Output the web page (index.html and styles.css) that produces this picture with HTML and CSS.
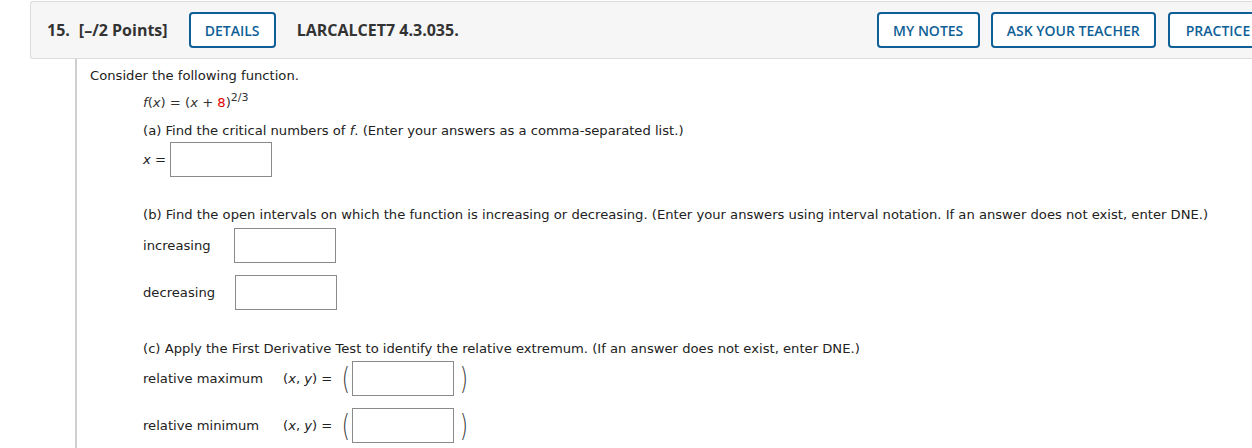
FILE: index.html
```html
<!DOCTYPE html>
<html>
<head>
<meta charset="utf-8">
<link rel="stylesheet" href="styles.css">
</head>
<body>
<div class="question">
  <div class="qhead">
    <span class="qnum">15.</span>
    <span class="qpts">[–/2 Points]</span>
    <span class="btn btn-details">DETAILS</span>
    <span class="qid">LARCALCET7 4.3.035.</span>
    <span class="spacer"></span>
    <span class="btn btn-notes">MY NOTES</span>
    <span class="btn btn-ask">ASK YOUR TEACHER</span>
    <span class="btn btn-practice">PRACTICE ANOTHER</span>
  </div>
  <div class="qbody">
    <p class="intro">Consider the following function.</p>
    <div class="indent">
      <p class="fn"><i>f</i>(<i>x</i>) = (<i>x</i> + <span class="red">8</span>)<sup>2/3</sup></p>
      <p class="part-a">(a) Find the critical numbers of <i>f</i>. (Enter your answers as a comma-separated list.)</p>
      <div class="row row-x"><span class="lbl-x"><i>x</i> =</span><span class="box"></span></div>
      <p class="part-b">(b) Find the open intervals on which the function is increasing or decreasing. (Enter your answers using interval notation. If an answer does not exist, enter DNE.)</p>
      <div class="row row-inc"><span class="lbl-int">increasing</span><span class="box"></span></div>
      <div class="row row-dec"><span class="lbl-int">decreasing</span><span class="box"></span></div>
      <p class="part-c">(c) Apply the First Derivative Test to identify the relative extremum. (If an answer does not exist, enter DNE.)</p>
      <div class="row row-ext"><span class="lbl-ext">relative maximum</span><span class="xy">(<i>x</i>, <i>y</i>) =</span><span class="paren">(</span><span class="box"></span><span class="paren">)</span></div>
      <div class="row row-ext2"><span class="lbl-ext">relative minimum</span><span class="xy">(<i>x</i>, <i>y</i>) =</span><span class="paren">(</span><span class="box"></span><span class="paren">)</span></div>
    </div>
  </div>
</div>
</body>
</html>
```
FILE: styles.css
```css
html, body { margin: 0; padding: 0; background: #fff; overflow: hidden; }
body { width: 1252px; height: 448px; }
.question { padding-top: 1px; margin-left: 30px; width: 1222px; overflow: hidden; }
.qhead {
  display: flex; align-items: center;
  height: 56px;
  width: 1400px;
  background: #f6f6f6;
  border: 1px solid #dcdcdc;
  border-right: none;
  border-radius: 3px 0 0 3px;
  font-family: "Open Sans", sans-serif;
  font-weight: 700;
  font-size: 16px;
  color: #333;
  white-space: nowrap;
}
.qnum { margin-left: 16px; }
.qpts { margin-left: 9px; }
.qid { margin-left: 21px; }
.spacer { width: 418px; }
.btn {
  display: inline-flex; align-items: center; justify-content: center;
  box-sizing: border-box;
  height: 36px;
  border: 2px solid #0f5f97;
  border-radius: 4px;
  background: #fff;
  color: #0f5f97;
  font-size: 14px;
  font-weight: 600;
  padding: 0 12px;
  flex: none;
}
.btn-details { margin-left: 21px; width: 87px; }
.btn-notes { width: 103px; }
.btn-ask { margin-left: 11px; width: 165px; }
.btn-practice { margin-left: 12px; width: 160px; justify-content: flex-start; padding-left: 16px; }
.qbody {
  margin-left: 45px;
  border-left: 2px solid #cfcfcf;
  padding-left: 13px;
  padding-top: 8px;
  height: 400px;
  font-family: "DejaVu Sans", Verdana, sans-serif;
  font-size: 13.15px;
  color: #222;
}
p { margin: 0; }
.intro { line-height: 17px; }
.indent { padding-left: 53px; }
.fn { margin-top: 10px; line-height: 17px; color: #333; }
.fn sup { font-size: 11px; vertical-align: 0; position: relative; top: -6px; }
.red { color: #d00; }
.part-a { margin-top: 10px; line-height: 17px; }
.row { display: flex; align-items: center; }
.box { display: inline-block; box-sizing: border-box; width: 102px; height: 35px; border: 1px solid #8a8a8a; background: #fff; }
.row-x { margin-top: 3px; }
.lbl-x { width: 27px; }
.part-b { margin-top: 29px; line-height: 17px; }
.row-inc { margin-top: 5px; }
.row-dec { margin-top: 12px; }
.lbl-int { width: 91px; }
.row-dec .lbl-int { width: 92px; }
.part-c { margin-top: 30px; line-height: 17px; }
.row-ext { margin-top: 4px; }
.row-ext2 { margin-top: 12px; }
.lbl-ext { width: 140px; }
.xy { width: 57px; }
.paren { font-size: 30px; font-weight: 200; line-height: 35px; color: #333; transform: scaleX(0.7); display: inline-block; }
.paren:first-of-type { margin-right: 2px; }
.box + .paren { margin-left: 4px; }
```
